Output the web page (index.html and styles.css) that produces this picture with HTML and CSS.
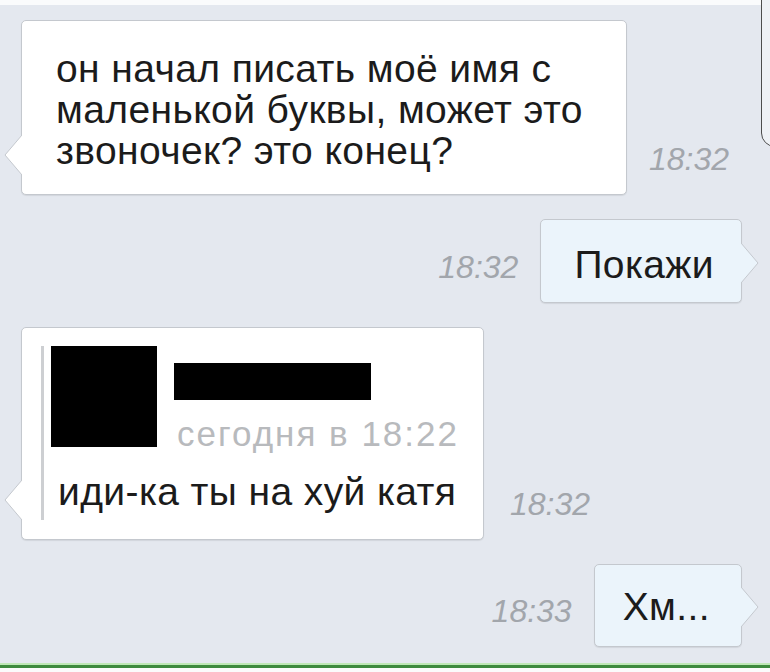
FILE: index.html
```html
<!DOCTYPE html>
<html lang="ru">
<head>
    <meta charset="UTF-8">
    <meta name="viewport" content="width=device-width, initial-scale=1.0">
    <title>Переписка</title>
    <link rel="stylesheet" href="styles.css">
</head>
<body>

<div class="screen">
  <div class="top-edge"></div>
  <div class="side-panel"></div>

  <div class="feed">
    <div class="row">
      <div class="bubble incoming first">
        <p class="msg">он начал писать моё имя с<br>маленькой буквы, может это<br>звоночек? это конец?</p>
        <svg class="tail tail-left" viewBox="0 0 18 40"><polygon points="18,0 1,20 18,40"/><polyline points="18,0 1,20 18,40"/></svg>
      </div>
      <span class="time">18:32</span>
    </div>

    <div class="row out">
      <span class="time">18:32</span>
      <div class="bubble outgoing show">
        <p class="msg">Покажи</p>
        <svg class="tail tail-right" viewBox="0 0 18 40"><polygon points="0,0 17,20 0,40"/><polyline points="0,0 17,20 0,40"/></svg>
      </div>
    </div>

    <div class="row">
      <div class="bubble incoming forwarded">
        <div class="quote">
          <div class="quote-head">
            <div class="avatar"></div>
            <div class="meta">
              <div class="name-bar"></div>
              <div class="date">сегодня в 18:22</div>
            </div>
          </div>
          <p class="msg">иди-ка ты на хуй катя</p>
        </div>
        <svg class="tail tail-left" viewBox="0 0 18 40"><polygon points="18,0 1,20 18,40"/><polyline points="18,0 1,20 18,40"/></svg>
      </div>
      <span class="time">18:32</span>
    </div>

    <div class="row out">
      <span class="time">18:33</span>
      <div class="bubble outgoing hm">
        <p class="msg">Хм...</p>
        <svg class="tail tail-right" viewBox="0 0 18 40"><polygon points="0,0 17,20 0,40"/><polyline points="0,0 17,20 0,40"/></svg>
      </div>
    </div>
  </div>

  <div class="bottom-line"></div>
</div>

</body>
</html>
```

FILE: styles.css
```css
* {
    box-sizing: border-box;
}
body {
    margin: 0;
    padding: 0;
    font-family: "Liberation Sans", Arial, sans-serif;
    color: #1b1b1b;
}
.screen {
    position: relative;
    width: 770px;
    height: 672px;
    overflow: hidden;
    background-color: #e4e8ef;
    display: flex;
    flex-direction: column;
}
.top-edge {
    flex: none;
    height: 5px;
    background-color: #fafbfc;
}
.side-panel {
    position: absolute;
    top: -20px;
    right: -20px;
    width: 29px;
    height: 167px;
    border: 1px solid #4d4d4d;
    border-radius: 0 0 0 14px;
    background-color: #eef1f5;
}
.feed {
    flex: 1;
    padding: 15px 28px 0 21px;
    display: flex;
    flex-direction: column;
}
.row {
    display: flex;
    align-items: flex-end;
    gap: 22px;
}
.row + .row {
    margin-top: 24px;
}
.row.out {
    justify-content: flex-end;
}
.bubble {
    position: relative;
    border: 1px solid #c4c8ce;
    border-radius: 5px;
    box-shadow: 0 1px 1px rgba(0, 0, 0, 0.08);
}
.incoming {
    background-color: #ffffff;
}
.outgoing {
    background-color: #ebf4fb;
}
.msg {
    margin: 0;
    font-size: 39px;
    line-height: 41px;
    letter-spacing: 0.4px;
    white-space: nowrap;
}
.first {
    width: 606px;
    padding: 27px 20px 23px 34px;
}
.show {
    padding: 24px 27px 17px 33px;
}
.hm {
    padding: 21px 31px 19px 28px;
}
.forwarded {
    padding: 18px 24px 19px 19px;
}
.quote {
    border-left: 3px solid #cdcfd2;
    padding: 0 0 8px 7px;
}
.quote-head {
    display: flex;
    gap: 17px;
}
.avatar {
    width: 106px;
    height: 101px;
    background-color: #000;
}
.meta {
    padding-top: 17px;
}
.name-bar {
    width: 197px;
    height: 37px;
    background-color: #000;
}
.date {
    margin-top: 14px;
    padding-left: 3px;
    font-size: 35px;
    line-height: 40px;
    color: #b8babd;
    letter-spacing: 2px;
    white-space: nowrap;
}
.quote .msg {
    margin-top: 17px;
    padding-left: 7px;
}
.time {
    margin-bottom: 20px;
    font-size: 32px;
    line-height: 32px;
    font-style: italic;
    color: #a2a6ac;
}
.forwarded + .time {
    margin-left: 4px;
}
.tail {
    position: absolute;
    width: 18px;
    height: 40px;
    bottom: 19px;
}
.tail polygon {
    stroke: none;
}
.tail polyline {
    fill: none;
    stroke: #c4c8ce;
    stroke-width: 1;
}
.tail-left {
    left: -18px;
}
.tail-right {
    right: -18px;
}
.incoming .tail polygon {
    fill: #ffffff;
}
.outgoing .tail polygon {
    fill: #ebf4fb;
}
.bottom-line {
    flex: none;
    height: 9px;
    border-top: 2px solid #bfe8b6;
    background: linear-gradient(#3e8a3e 0, #3e8a3e 3px, #fbfbfb 3px);
}
```
